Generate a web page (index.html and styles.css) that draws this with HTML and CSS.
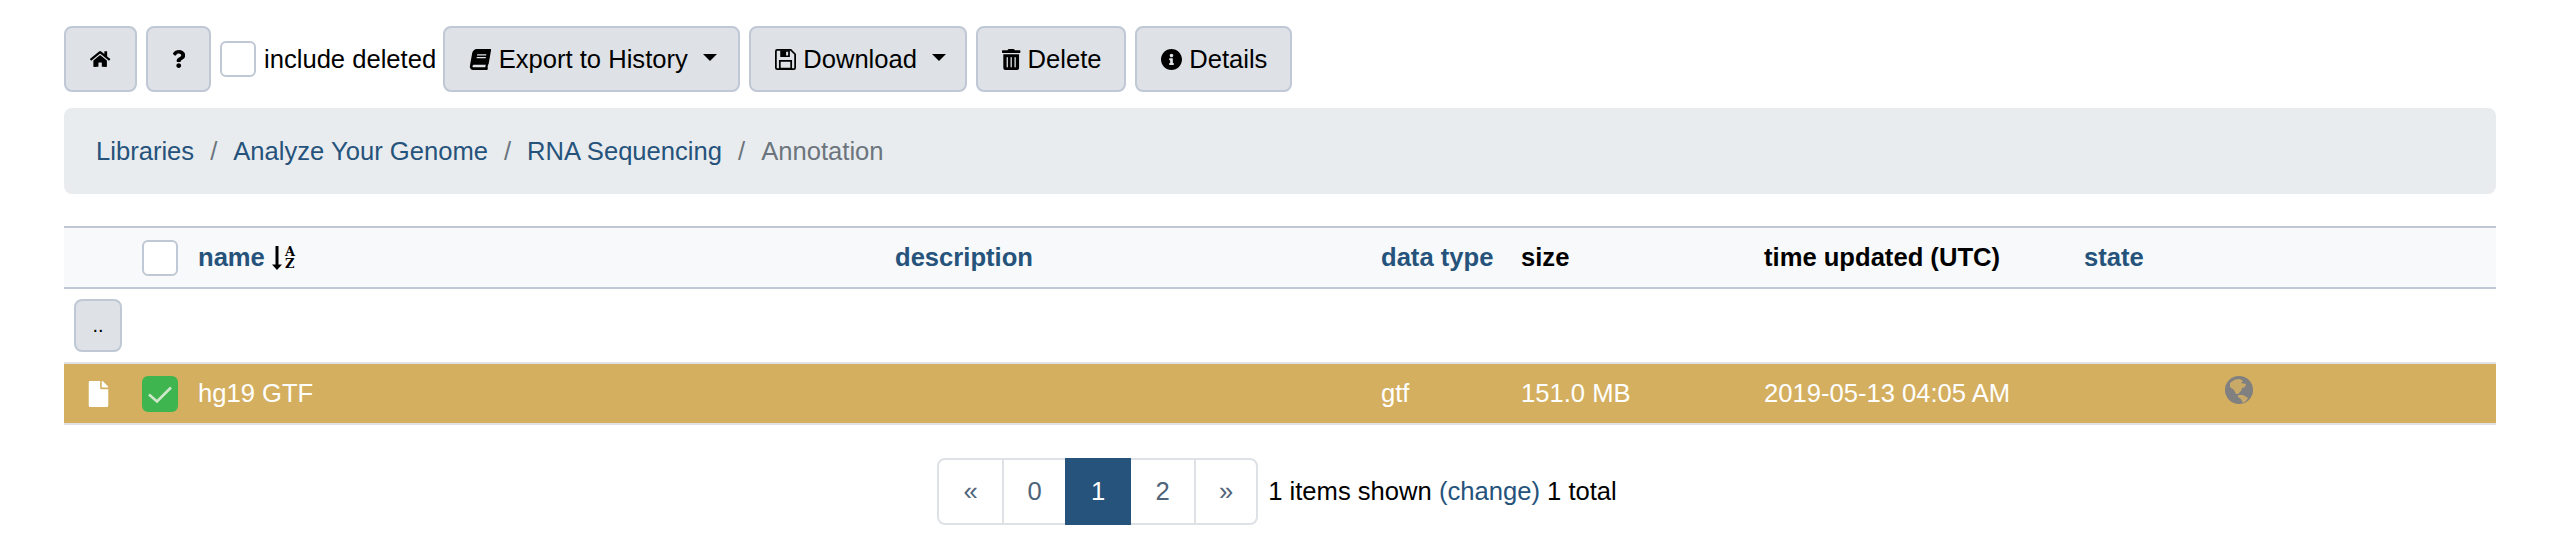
FILE: index.html
```html
<!doctype html>
<html lang="en">

<head>
  <meta charset="UTF-8">
  <title>Libraries</title>
  <link rel="stylesheet" href="styles.css">
</head>

<body>

  <div class="toolbar">
    <button class="btn btn-home"><svg class="icon icon-small" viewBox="0 0 576 512"><path d="M280.37 148.26L96 300.11V464a16 16 0 0 0 16 16l112.06-.29a16 16 0 0 0 15.92-16V368a16 16 0 0 1 16-16h64a16 16 0 0 1 16 16v95.64a16 16 0 0 0 16 16.05L464 480a16 16 0 0 0 16-16V300L295.67 148.26a12.19 12.19 0 0 0-15.3 0zM571.6 251.47L488 182.56V44.05a12 12 0 0 0-12-12h-56a12 12 0 0 0-12 12v72.61L318.47 43a48 48 0 0 0-61 0L4.34 251.47a12 12 0 0 0-1.6 16.9l25.5 31A12 12 0 0 0 45.15 301l235.22-193.74a12.19 12.19 0 0 1 15.3 0L530.9 301a12 12 0 0 0 16.9-1.6l25.5-31a12 12 0 0 0-1.7-16.93z"/></svg></button>
    <button class="btn btn-help"><svg class="icon icon-small" viewBox="0 0 384 512"><path d="M202.021 0C122.202 0 70.503 32.703 29.914 91.026c-7.363 10.58-5.093 25.086 5.178 32.874l43.138 32.709c10.373 7.865 25.132 6.026 33.253-4.148 25.049-31.381 43.63-49.449 82.757-49.449 30.764 0 68.816 19.799 68.816 49.631 0 22.552-18.617 34.134-48.993 51.164-35.423 19.86-82.299 44.576-82.299 106.405V320c0 13.255 10.745 24 24 24h72.471c13.255 0 24-10.745 24-24v-5.773c0-42.86 125.268-44.645 125.268-160.627C377.504 66.256 286.902 0 202.021 0zM192 373.459c-38.196 0-69.271 31.075-69.271 69.271 0 38.195 31.075 69.27 69.271 69.27s69.271-31.075 69.271-69.271-31.075-69.27-69.271-69.27z"/></svg></button>
    <label class="deleted"><span class="check"></span>include deleted</label>
    <button class="btn btn-label btn-export"><svg class="icon" viewBox="-50 0 548 512"><path transform="skewX(-10) translate(45 0)" d="M448 360V24c0-13.3-10.7-24-24-24H96C43 0 0 43 0 96v320c0 53 43 96 96 96h328c13.3 0 24-10.7 24-24v-16c0-7.5-3.5-14.3-8.9-18.7-4.2-15.4-4.2-59.3 0-74.7 5.4-4.3 8.9-11.1 8.9-18.6zM128 134c0-3.3 2.7-6 6-6h212c3.3 0 6 2.7 6 6v20c0 3.3-2.7 6-6 6H134c-3.3 0-6-2.7-6-6v-20zm0 64c0-3.3 2.7-6 6-6h212c3.3 0 6 2.7 6 6v20c0 3.3-2.7 6-6 6H134c-3.3 0-6-2.7-6-6v-20zm253.4 250H96c-17.7 0-32-14.3-32-32 0-17.6 14.4-32 32-32h285.4c-1.9 17.1-1.9 46.9 0 64z"/></svg>Export to History<span class="caret"></span></button>
    <button class="btn btn-label btn-download"><svg class="icon" viewBox="0 0 24 24"><path d="M1 2.500a1.500 1.500 0 0 1 1.500-1.500H18l5 5v15.500a1.500 1.500 0 0 1-1.500 1.500h-19a1.500 1.500 0 0 1-1.500-1.500z" fill="none" stroke="#000" stroke-width="2"/><path d="M6 1.500h11v7.500H6z M12.700 3v4.300h2.300V3z" fill-rule="evenodd"/><path d="M5.500 13.500h13v9h-13z" fill="none" stroke="#000" stroke-width="2"/></svg>Download<span class="caret"></span></button>
    <button class="btn btn-label btn-delete"><svg class="icon" viewBox="0 0 448 512"><path d="M32 464a48 48 0 0 0 48 48h288a48 48 0 0 0 48-48V128H32zm272-256a16 16 0 0 1 32 0v224a16 16 0 0 1-32 0zm-96 0a16 16 0 0 1 32 0v224a16 16 0 0 1-32 0zm-96 0a16 16 0 0 1 32 0v224a16 16 0 0 1-32 0zM432 32H312l-9.400-18.700A24 24 0 0 0 281.100 0H166.800a23.720 23.720 0 0 0-21.400 13.300L136 32H16A16 16 0 0 0 0 48v32a16 16 0 0 0 16 16h416a16 16 0 0 0 16-16V48a16 16 0 0 0-16-16z"/></svg>Delete</button>
    <button class="btn btn-label btn-details"><svg class="icon" viewBox="8 8 496 496"><path d="M256 8C119.043 8 8 119.083 8 256c0 136.997 111.043 248 248 248s248-111.003 248-248C504 119.083 392.957 8 256 8zm0 110c23.196 0 42 18.804 42 42s-18.804 42-42 42-42-18.804-42-42 18.804-42 42-42zm56 254c0 6.627-5.373 12-12 12h-88c-6.627 0-12-5.373-12-12v-24c0-6.627 5.373-12 12-12h12v-64h-12c-6.627 0-12-5.373-12-12v-24c0-6.627 5.373-12 12-12h64c6.627 0 12 5.373 12 12v100h12c6.627 0 12 5.373 12 12v24z"/></svg>Details</button>
  </div>

  <nav class="crumbs">
    <a href="#">Libraries</a><span class="sep">/</span>
    <a href="#">Analyze Your Genome</a><span class="sep">/</span>
    <a href="#">RNA Sequencing</a><span class="sep">/</span>
    <span class="current">Annotation</span>
  </nav>

  <table class="files">
    <colgroup>
      <col class="c-icon">
      <col class="c-check">
      <col class="c-name">
      <col class="c-desc">
      <col class="c-type">
      <col class="c-size">
      <col class="c-time">
      <col class="c-state">
      <col>
    </colgroup>
    <thead>
      <tr>
        <th></th>
        <th><span class="check"></span></th>
        <th><a href="#">name</a> <span class="sort"><svg viewBox="0 0 10 24"><path d="M3.500 0h3v18.500h3.500L5 24 0 18.500h3.500z"/></svg><span class="sort-letters"><span>A</span><span>Z</span></span></span></th>
        <th><a href="#">description</a></th>
        <th><a href="#">data type</a></th>
        <th>size</th>
        <th>time updated (UTC)</th>
        <th><a href="#">state</a></th>
        <th></th>
      </tr>
    </thead>
    <tbody>
      <tr class="row-up">
        <td colspan="9"><button class="btn btn-up">..</button></td>
      </tr>
      <tr class="row-selected">
        <td><svg class="icon-file" viewBox="0 0 384 512"><path d="M224 136V0H24C10.700 0 0 10.700 0 24v464c0 13.300 10.700 24 24 24h336c13.300 0 24-10.700 24-24V160H248c-13.200 0-24-10.800-24-24zm160-14.100v6.100H256V0h6.100c6.400 0 12.500 2.500 17 7l97.900 98c4.500 4.500 7 10.600 7 16.900z"/></svg></td>
        <td><span class="check check-on"><svg viewBox="0 0 36 36"><path d="M7 18.500l8 7 14-14" fill="none" stroke="#cfe8cc" stroke-width="2.600"/></svg></span></td>
        <td>hg19 GTF</td>
        <td></td>
        <td>gtf</td>
        <td>151.0 MB</td>
        <td>2019-05-13 04:05 AM</td>
        <td></td>
        <td><svg class="icon-globe" viewBox="0 0 28 28"><circle cx="14" cy="14" r="14" fill="#808080"/><path d="M5 7l5-3.500 5-.5 3 2-2 2 5 1-1 3-3 1-1 3-3 3h-2l-2-4-4-3z M13 19h5l5 3-2 3-3 2-2-4-3-2z" fill="#c9a968"/></svg></td>
      </tr>
    </tbody>
  </table>

  <div class="footer">
    <ul class="pager">
      <li>«</li>
      <li>0</li>
      <li class="active">1</li>
      <li>2</li>
      <li>»</li>
    </ul>
    <span class="shown">1 items shown <a href="#">(change)</a> 1 total</span>
  </div>

</body>

</html>
```

FILE: styles.css
```css
* {
  margin: 0px;
  padding: 0px;
  box-sizing: border-box;
}

body {
  padding: 26px 64px 0;
  background: #fff;
  color: #000;
  font-family: "Liberation Sans", sans-serif;
  font-size: 25.6px;
  line-height: 39px;
}

a {
  color: #25537b;
  text-decoration: none;
}

.toolbar {
  display: flex;
  align-items: center;
  gap: 9px;
  height: 66px;
}

.btn {
  display: flex;
  align-items: center;
  justify-content: center;
  height: 66px;
  background: #dee2e6;
  border: 2px solid #bfc8d4;
  border-radius: 8px;
  color: #000;
  font-family: inherit;
  font-size: 25.6px;
  line-height: 39px;
}

.btn-label {
  justify-content: flex-start;
  padding-left: 24px;
}

.icon {
  height: 21px;
  margin-right: 7px;
  fill: #000;
}

.icon-small {
  height: 18px;
  margin-right: 0;
}

.btn-home { width: 73px; }
.btn-help { width: 65px; }
.btn-export { width: 297px; }
.btn-download { width: 218px; }
.btn-delete { width: 150px; }
.btn-details { width: 157px; }

.caret {
  width: 0;
  height: 0;
  margin-left: 15px;
  margin-bottom: 4px;
  border-top: 7px solid #000;
  border-left: 7px solid transparent;
  border-right: 7px solid transparent;
}

.check {
  display: block;
  width: 36px;
  height: 36px;
  background: #fff;
  border: 2px solid #bfc8d4;
  border-radius: 6px;
}

.check-on {
  background: #3fb54f;
  border-color: #3fb54f;
}

.check-on svg {
  display: block;
  width: 36px;
  height: 36px;
  margin: -2px;
}

.deleted {
  display: flex;
  align-items: center;
  gap: 8px;
  margin-right: -2px;
}

.crumbs {
  display: flex;
  align-items: center;
  height: 86px;
  margin-top: 16px;
  padding: 0 32px;
  background: #e9ecef;
  border-radius: 8px;
}

.sep {
  padding: 0 16px;
  color: #6c757d;
}

.current {
  color: #6c757d;
}

.files {
  width: 100%;
  margin-top: 32px;
  border-collapse: collapse;
  table-layout: fixed;
}

.c-icon { width: 68px; }
.c-check { width: 56px; }
.c-name { width: 697px; }
.c-desc { width: 486px; }
.c-type { width: 140px; }
.c-size { width: 243px; }
.c-time { width: 320px; }
.c-state { width: 141px; }

.files th {
  height: 61px;
  padding: 0 10px;
  background: #f8f9fa;
  border-top: 2px solid #bfc8d4;
  border-bottom: 2px solid #bfc8d4;
  text-align: left;
  font-weight: 700;
  white-space: nowrap;
}

.sort {
  display: inline-flex;
  gap: 3px;
  vertical-align: -4px;
}

.sort svg {
  display: block;
  width: 10px;
  height: 24px;
}

.sort-letters {
  display: flex;
  flex-direction: column;
  font-family: "DejaVu Serif", serif;
  font-size: 13px;
  line-height: 12px;
}

.row-up td {
  height: 75px;
  padding: 0 10px;
}

.btn-up {
  width: 48px;
  height: 53px;
  font-size: 20px;
}

.row-selected td {
  height: 61px;
  padding: 0 10px;
  background: #d4af5f;
  border-top: 2px solid #dee2e6;
  border-bottom: 2px solid #dee2e6;
  color: #fff;
}

.icon-file {
  display: block;
  width: 21px;
  height: 26px;
  margin-left: 14px;
  fill: #fff;
}

.icon-globe {
  display: block;
  width: 28px;
  height: 28px;
  margin-top: -8px;
}

.footer {
  display: flex;
  justify-content: center;
  align-items: center;
  gap: 10px;
  margin-top: 33px;
  padding-right: 6px;
}

.pager {
  display: flex;
  list-style: none;
  height: 67px;
  border: 2px solid #dee2e6;
  border-radius: 8px;
}

.pager li {
  display: flex;
  align-items: center;
  justify-content: center;
  width: 63px;
  border-left: 2px solid #dee2e6;
  color: #4f6379;
}

.pager li:first-child {
  border-left: 0;
}

.pager li:last-child {
  width: 62px;
}

.pager .active {
  width: 66px;
  margin: -2px 0;
  background: #25537b;
  border-left: 0;
  color: #fff;
}

.pager .active + li {
  border-left: 0;
}
```
